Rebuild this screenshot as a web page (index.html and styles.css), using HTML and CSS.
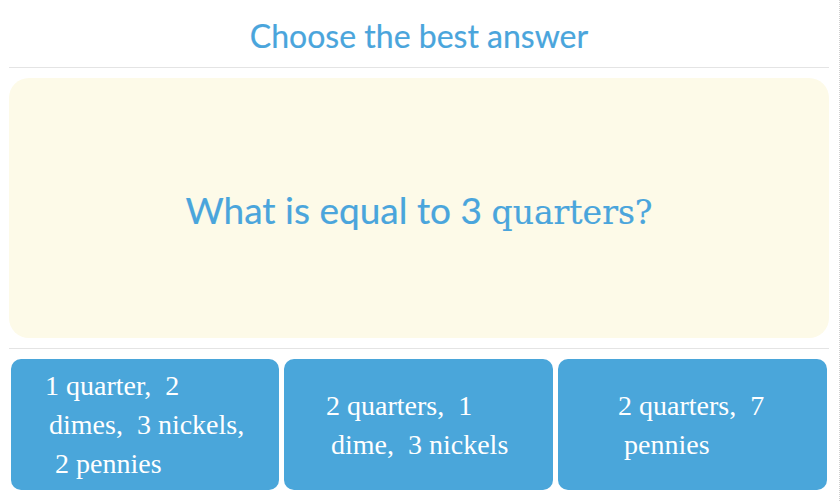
FILE: index.html
```html
<!DOCTYPE html>
<html>
<head>
<meta charset="utf-8">
<link rel="stylesheet" href="styles.css">
</head>
<body>
<div class="frame">
  <div class="page">
    <header class="title">Choose the best answer</header>
    <section class="question">
      <p class="prompt">What is equal to 3 <span class="serif">quarters?</span></p>
    </section>
    <div class="answers">
      <button class="answer">
        <span class="line l1a">1 quarter,&nbsp; 2</span>
        <span class="line l1b">dimes,&nbsp; 3 nickels,</span>
        <span class="line l1c">2 pennies</span>
      </button>
      <button class="answer">
        <span class="line l2a">2 quarters,&nbsp; 1</span>
        <span class="line l2b">dime,&nbsp; 3 nickels</span>
      </button>
      <button class="answer">
        <span class="line l3a">2 quarters,&nbsp; 7</span>
        <span class="line l3b">pennies</span>
      </button>
    </div>
  </div>
</div>
</body>
</html>
```

FILE: styles.css
```css
html, body {
  margin: 0;
  padding: 0;
  background: #ffffff;
}

.frame {
  width: 839px;
  min-height: 501px;
  border-right: 1px dotted #cfcfcf;
}

.page {
  width: 820px;
  margin-left: 9px;
}

.title {
  height: 68px;
  border-bottom: 1px solid #e4e4e4;
  display: flex;
  align-items: center;
  justify-content: center;
  padding-top: 3px;
  box-sizing: border-box;
  font-family: Lato, "Open Sans", sans-serif;
  font-size: 32px;
  color: #4aa5dc;
  -webkit-text-stroke: 0.2px #4aa5dc;
}

.question {
  margin-top: 10px;
  height: 260px;
  background: #fdfae8;
  border-radius: 20px;
  display: flex;
  align-items: center;
  justify-content: center;
}

.prompt {
  margin: 0;
  padding-top: 2px;
  font-family: Lato, "Open Sans", sans-serif;
  font-size: 37px;
  color: #4aa5dc;
  -webkit-text-stroke: 0.2px #4aa5dc;
}

.serif {
  font-family: "DejaVu Serif", serif;
  font-size: 33px;
}

.answers {
  margin-top: 10px;
  border-top: 1px solid #e4e4e4;
  padding: 10px 2px 0;
  display: grid;
  grid-template-columns: 268px 269px 269px;
  column-gap: 5px;
}

.answer {
  height: 131px;
  border: none;
  margin: 0;
  padding: 0;
  background: #4aa6da;
  border-radius: 10px;
  color: #ffffff;
  font-family: "Liberation Serif", serif;
  font-size: 28px;
  line-height: 39px;
  text-align: left;
  display: flex;
  flex-direction: column;
  justify-content: center;
}

.line {
  display: block;
  white-space: nowrap;
}

.l1a { margin-left: 34px; }
.l1b { margin-left: 38px; }
.l1c { margin-left: 44px; }
.l2a { margin-left: 42px; }
.l2b { margin-left: 47px; }
.l3a { margin-left: 60px; }
.l3b { margin-left: 66px; }
```
